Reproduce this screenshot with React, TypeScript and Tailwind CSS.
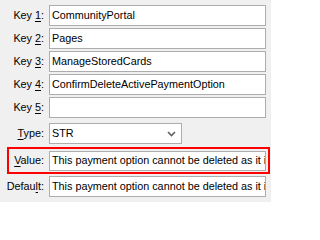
import React from 'react';

const font = { fontFamily: '"Liberation Sans", Arial, sans-serif' };

// Label with one underlined access key, like a Windows form
const Label = ({ pre, key1, post, className = '' }: { pre: string; key1: string; post: string; className?: string }) => (
  <div className={`text-right text-[10.8px] text-black leading-none whitespace-nowrap ${className}`}>
    {pre}
    <span className="underline underline-offset-2">{key1}</span>
    {post}
  </div>
);

const Field = ({ value }: { value: string }) => (
  <div className="w-[217px] h-[21px] bg-white border border-[#adadad] flex items-center px-[2px] overflow-hidden whitespace-nowrap text-[10.8px] text-black">
    {value}
  </div>
);

const keys = ['CommunityPortal', 'Pages', 'ManageStoredCards', 'ConfirmDeleteActivePaymentOption', ''];
const message = 'This payment option cannot be deleted as it is';

export default function App() {
  return (
    <div className="w-[271px] h-[202px] bg-[#f0f0f0] pt-[5px] flex flex-col overflow-hidden" style={font}>
      <div className="flex flex-col gap-[2px]">
        {keys.map((k, i) => (
          <div key={i} className="flex items-center gap-[5px]">
            <Label pre="Key " key1={String(i + 1)} post=":" className="w-[44px]" />
            <Field value={k} />
          </div>
        ))}
      </div>

      <div className="flex items-center gap-[5px] mt-[5px]">
        <Label pre="" key1="T" post="ype:" className="w-[44px]" />
        <div className="w-[133px] h-[21px] bg-white border border-[#adadad] flex items-center justify-between pl-[2px] pr-[5px] text-[10.8px] text-black">
          <span>STR</span>
          <svg width="9" height="6" viewBox="0 0 9 6" className="text-[#606060]">
            <path d="M1 1 L4.5 4.5 L8 1" fill="none" stroke="currentColor" strokeWidth="1.6" />
          </svg>
        </div>
      </div>

      <div className="ml-[7px] mt-[3px] w-[263px] h-[27px] border-2 border-[#ff0000] flex items-center gap-[5px]">
        <Label pre="" key1="V" post="alue:" className="w-[35px]" />
        <div className="w-[217px] h-[20px] bg-white border border-[#adadad] flex items-center px-[2px] overflow-hidden whitespace-nowrap text-[10.8px] text-black">
          {message}
        </div>
      </div>

      <div className="flex items-center gap-[5px] mt-[2px]">
        <Label pre="Defau" key1="l" post="t:" className="w-[44px]" />
        <Field value={message} />
      </div>
    </div>
  );
}
